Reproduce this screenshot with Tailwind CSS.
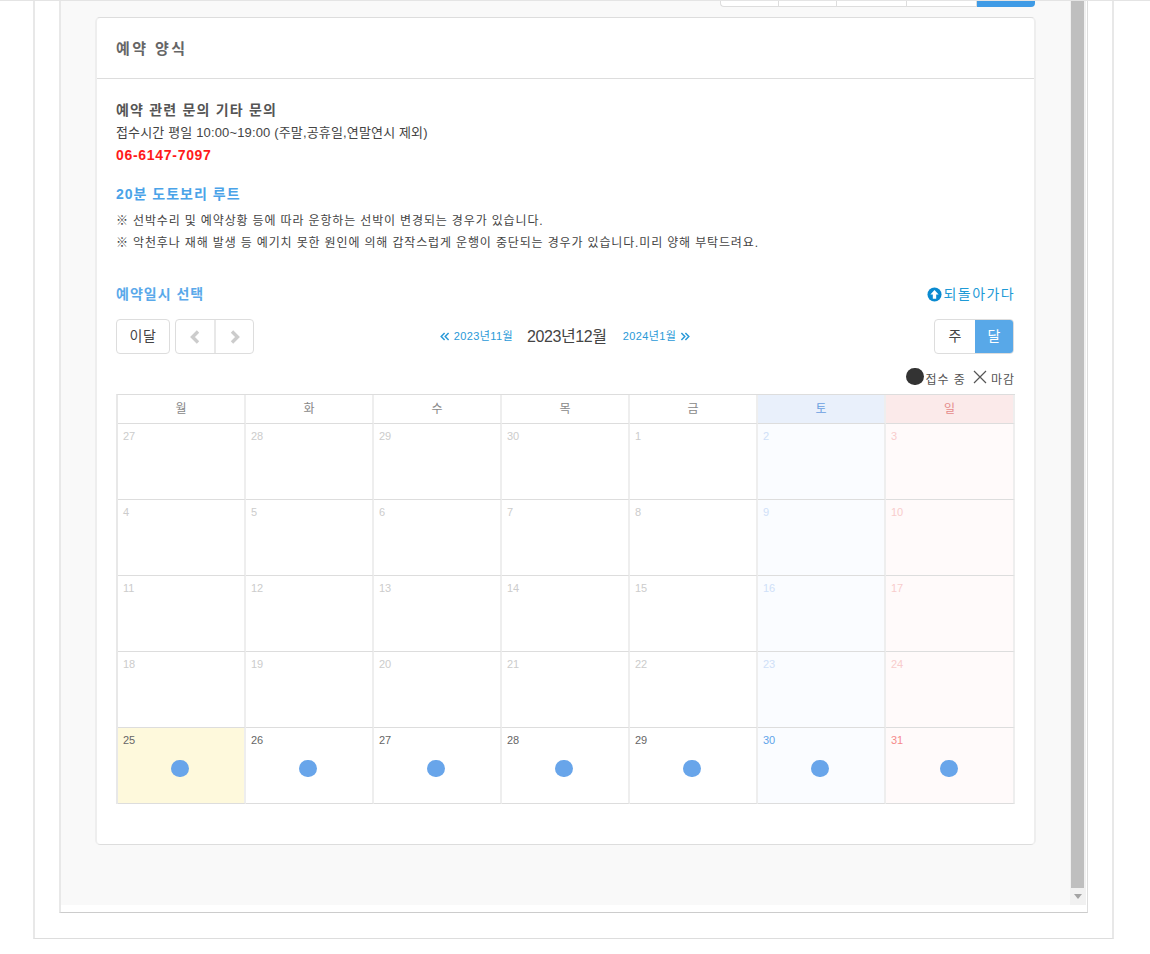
<!DOCTYPE html>
<html lang="ko">
<head>
  <meta charset="UTF-8" />
  <title>예약 양식</title>
  <script src="https://cdn.jsdelivr.net/npm/@tailwindcss/browser@4"></script>
</head>
<body class="bg-white h-[954px] overflow-hidden border-t border-[#e4e4e4] font-['Liberation_Sans','Noto_Sans_CJK_KR',sans-serif] text-[#555]">

  <!-- outer frame -->
  <div class="ml-[33px] w-[1081px] h-[938px] border-x-2 border-x-[#e8e8e8] border-b border-b-[#ddd] pl-[24px]">
    <!-- inner frame -->
    <div class="w-[1029px] h-[912px] border-l-2 border-l-[#e8e8e8] border-r border-r-[#ddd] border-b border-b-[#ccc] bg-white">
      <div class="flex h-[904px]">
        <div class="w-[1009px] bg-[#f9f9f9] pl-[34px]">

          <!-- tabs -->
          <div class="w-[940px] h-[6px] flex justify-end">
            <div class="flex h-[6px]">
              <div class="w-[58px] bg-white border-l border-b border-[#ddd] rounded-bl"></div>
              <div class="w-[59px] bg-white border-x border-b border-[#ddd]"></div>
              <div class="w-[70px] bg-white border-r border-b border-[#ddd]"></div>
              <div class="w-[70px] bg-white border-r border-b border-[#ddd]"></div>
              <div class="w-[58px] bg-[#3f9be6] rounded-br"></div>
            </div>
          </div>

          <!-- card -->
          <div class="mt-[10px] w-[941px] h-[828px] bg-white border-x-2 border-x-[#eee] border-y border-y-[#ddd] rounded-[5px]">
            <div class="h-[61px] border-b border-[#ddd] px-[19px] pt-[2px] flex items-center">
              <h2 class="text-[15px] tracking-[2.4px] font-bold text-[#666]">예약 양식</h2>
            </div>

            <div class="px-[19px] pt-[21px]">
              <p class="text-[14px] tracking-[1.2px] leading-[20px] font-bold text-[#555]">예약 관련 문의 기타 문의</p>
              <p class="mt-[1px] text-[13px] leading-[24px] tracking-[0.15px] text-[#444]">접수시간 평일 10:00~19:00 (주말,공휴일,연말연시 제외)</p>
              <p class="text-[14px] tracking-[0.7px] leading-[20px] font-bold text-[#ff1a1a]">06-6147-7097</p>

              <p class="mt-[18px] text-[14px] tracking-[1px] leading-[22px] font-bold text-[#4aa3e8]">20분 도토보리 루트</p>
              <p class="mt-[5px] text-[12px] tracking-[0.85px] leading-[22px] text-[#444]">※ 선박수리 및 예약상황 등에 따라 운항하는 선박이 변경되는 경우가 있습니다.</p>
              <p class="text-[12px] tracking-[0.85px] leading-[22px] text-[#444]">※ 악천후나 재해 발생 등 예기치 못한 원인에 의해 갑작스럽게 운행이 중단되는 경우가 있습니다.미리 양해 부탁드려요.</p>

              <div class="mt-[29px] flex items-center justify-between h-[22px]">
                <span class="text-[14px] tracking-[1px] font-bold text-[#5aa9ea]">예약일시 선택</span>
                <span class="flex items-center gap-[2px] text-[14px] tracking-[1.4px] text-[#1e9ad6]">
                  <svg class="w-[15px] h-[15px]" viewBox="0 0 16 16"><circle cx="8" cy="8" r="7.5" fill="#0a8ad0"/><path d="M8 3.2 12.4 8H9.8v4.6H6.2V8H3.6z" fill="#fff"/></svg>
                  되돌아가다
                </span>
              </div>

              <!-- toolbar -->
              <div class="mt-[14px] mr-px h-[35px] grid grid-cols-[1fr_auto_1fr] items-center">
                <div class="flex items-center">
                  <button class="w-[54px] h-[35px] border border-[#ddd] rounded text-[14px] tracking-[0.5px] text-[#444]">이달</button>
                  <div class="ml-[5px] flex w-[79px] h-[35px] border border-[#ddd] rounded">
                    <div class="w-[40px] border-r-2 border-[#e8e8e8] flex items-center justify-center">
                      <svg class="w-[12px] h-[14px]" viewBox="0 0 12 14"><path d="M9 1.5 3.5 7 9 12.5" fill="none" stroke="#ccc" stroke-width="3.4"/></svg>
                    </div>
                    <div class="flex-1 flex items-center justify-center">
                      <svg class="w-[12px] h-[14px]" viewBox="0 0 12 14"><path d="M3 1.5 8.5 7 3 12.5" fill="none" stroke="#ccc" stroke-width="3.4"/></svg>
                    </div>
                  </div>
                </div>

                <div class="flex items-center">
                  <span class="flex items-center gap-[4px] text-[11px] tracking-[0.4px] text-[#2a9ad8]">
                    <svg class="w-[10px] h-[9px]" viewBox="0 0 10 9"><path d="M4.6 1 1.2 4.5 4.6 8M8.6 1 5.2 4.5 8.6 8" fill="none" stroke="#2a9ad8" stroke-width="1.5"/></svg>
                    2023년11월
                  </span>
                  <span class="ml-[14px] mr-[16px] text-[16px] tracking-[-0.4px] text-[#444]">2023년12월</span>
                  <span class="flex items-center gap-[4px] text-[11px] tracking-[0.4px] text-[#2a9ad8]">
                    2024년1월
                    <svg class="w-[10px] h-[9px]" viewBox="0 0 10 9"><path d="M1.4 1 4.8 4.5 1.4 8M5.4 1 8.8 4.5 5.4 8" fill="none" stroke="#2a9ad8" stroke-width="1.5"/></svg>
                  </span>
                </div>

                <div class="flex justify-end">
                  <div class="flex w-[80px] h-[35px] border border-[#ddd] rounded overflow-hidden">
                    <div class="w-[40px] flex items-center justify-center text-[14px] text-[#444]">주</div>
                    <div class="flex-1 bg-[#58a8e8] flex items-center justify-center text-[14px] text-white">달</div>
                  </div>
                </div>
              </div>

              <!-- legend -->
              <div class="h-[40px] flex justify-end items-end pb-[5px] text-[12px] tracking-[1px] text-[#555]">
                <span class="w-[18px] h-[17px] rounded-full bg-[#333] mb-[4px]"></span>
                <span class="ml-px">접수 중</span>
                <svg class="ml-[7px] mb-[5px] w-[14px] h-[14px]" viewBox="0 0 14 14"><path d="M1 1 13 13M13 1 1 13" fill="none" stroke="#555" stroke-width="1.2"/></svg>
                <span class="ml-[4px]">마감</span>
              </div>

              <!-- calendar -->
              <div class="w-[899px] grid grid-cols-[repeat(6,128px)_129px] border-t border-t-[#ddd] border-l-2 border-l-[#e8e8e8]">
                <div class="h-[29px] border-r-2 border-r-[#eee] border-b border-b-[#ddd] flex items-center justify-center text-[12px] text-[#888]">월</div>
                <div class="h-[29px] border-r-2 border-r-[#eee] border-b border-b-[#ddd] flex items-center justify-center text-[12px] text-[#888]">화</div>
                <div class="h-[29px] border-r-2 border-r-[#eee] border-b border-b-[#ddd] flex items-center justify-center text-[12px] text-[#888]">수</div>
                <div class="h-[29px] border-r-2 border-r-[#eee] border-b border-b-[#ddd] flex items-center justify-center text-[12px] text-[#888]">목</div>
                <div class="h-[29px] border-r-2 border-r-[#eee] border-b border-b-[#ddd] flex items-center justify-center text-[12px] text-[#888]">금</div>
                <div class="h-[29px] border-r-2 border-r-[#eee] border-b border-b-[#ddd] bg-[#e9f0fb] flex items-center justify-center text-[12px] text-[#6a9fe0]">토</div>
                <div class="h-[29px] border-r-2 border-r-[#eee] border-b border-b-[#ddd] bg-[#fbeaea] flex items-center justify-center text-[12px] text-[#e58a8a]">일</div>
              </div>
              <div id="cal" class="w-[899px] grid grid-cols-[repeat(6,128px)_129px] border-l-2 border-l-[#e8e8e8]"></div>
            </div>
          </div>
        </div>

        <!-- scrollbar -->
        <div class="w-[16px] bg-[#f1f1f1] flex flex-col">
          <div class="ml-px w-[13px] flex-1 bg-[#bfbfbf]"></div>
          <div class="h-[17px] flex items-center justify-center">
            <svg class="w-[8px] h-[5px]" viewBox="0 0 8 5"><path d="M0 0h8L4 5z" fill="#a3a3a3"/></svg>
          </div>
        </div>
      </div>
    </div>
  </div>

  <script>
    const days = [27,28,29,30,1,2,3,4,5,6,7,8,9,10,11,12,13,14,15,16,17,18,19,20,21,22,23,24,25,26,27,28,29,30,31];
    const cal = document.getElementById('cal');
    cal.innerHTML = days.map((d, i) => {
      const col = i % 7;
      const open = i >= 28;
      let bg = col === 5 ? 'bg-[#fafcff]' : col === 6 ? 'bg-[#fffafa]' : 'bg-white';
      if (i === 28) bg = 'bg-[#fef9dc]';
      let txt;
      if (col === 5) txt = open ? 'text-[#5fa4ea]' : 'text-[#cfe0f8]';
      else if (col === 6) txt = open ? 'text-[#f58a8a]' : 'text-[#f8cccc]';
      else txt = open ? 'text-[#666]' : 'text-[#ccc]';
      return `<div class="h-[76px] border-r-2 border-r-[#eee] border-b border-b-[#ddd] pl-[5px] pr-[7px] pt-[6px] ${bg}">
        <div class="text-[11px] leading-[12px] ${txt}">${d}</div>
        ${open ? '<div class="mt-[14px] mx-auto w-[18px] h-[17px] rounded-full bg-[#68a5ea]"></div>' : ''}
      </div>`;
    }).join('');
  </script>
</body>
</html>
